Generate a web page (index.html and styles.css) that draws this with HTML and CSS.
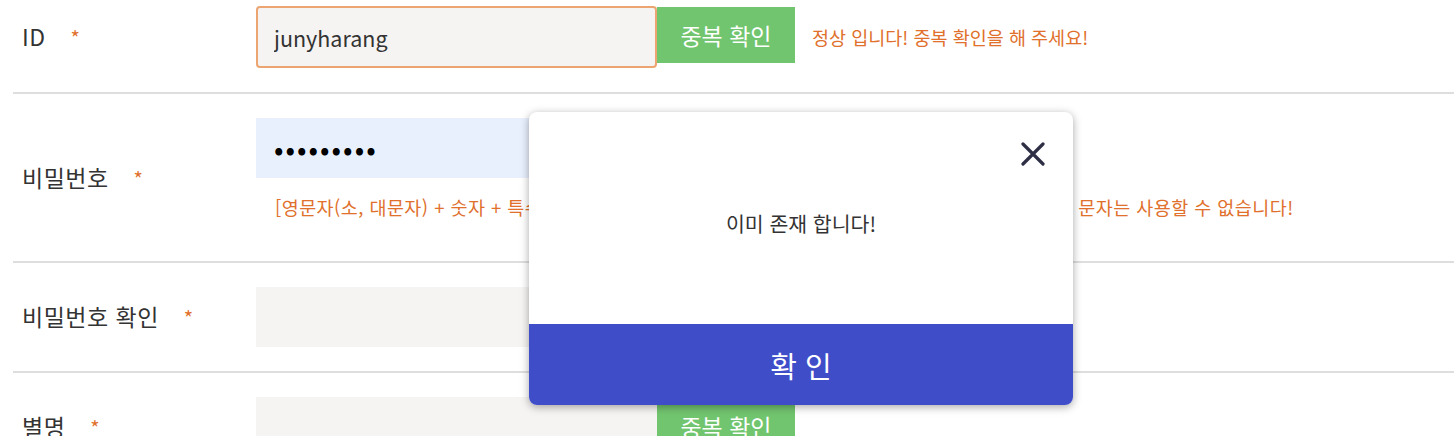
FILE: index.html
```html
<!DOCTYPE html>
<html lang="ko">
<head>
  <meta charset="UTF-8" />
  <meta name="viewport" content="width=device-width, initial-scale=1.0"/>
  <title>회원 가입</title>
  <link rel="stylesheet" href="styles.css">
</head>
<body>

  <form class="join-form">
    <div class="row first">
      <label class="label">ID <span class="req">*</span></label>
      <div class="field">
        <div class="line">
          <input type="text" class="input focused" value="junyharang" />
          <button type="button" class="check-btn">중복 확인</button>
          <span class="msg">정상 입니다! 중복 확인을 해 주세요!</span>
        </div>
      </div>
    </div>

    <div class="row">
      <label class="label">비밀번호 <span class="req">*</span></label>
      <div class="field">
        <div class="line">
          <input type="password" class="input filled" value="harang123" />
        </div>
        <p class="help">[영문자(소, 대문자) + 숫자 + 특수 문자] 조합으로 8~20자리 이내로 입력해 주세요. 그 외의 다른 특수 문자는 사용할 수 없습니다!</p>
      </div>
    </div>

    <div class="row">
      <label class="label">비밀번호 확인 <span class="req">*</span></label>
      <div class="field">
        <div class="line">
          <input type="password" class="input" />
        </div>
      </div>
    </div>

    <div class="row">
      <label class="label">별명 <span class="req">*</span></label>
      <div class="field">
        <div class="line">
          <input type="text" class="input" />
          <button type="button" class="check-btn">중복 확인</button>
        </div>
      </div>
    </div>
  </form>

  <div class="modal">
    <div class="modal-body">
      <button type="button" class="modal-close" aria-label="닫기">
        <svg width="24" height="24" viewBox="0 0 24 24">
          <path d="M2 2 L22 22 M22 2 L2 22" stroke="#2e2f44" stroke-width="3.2" stroke-linecap="round" fill="none"/>
        </svg>
      </button>
      <p class="modal-text">이미 존재 합니다!</p>
    </div>
    <button type="button" class="modal-ok">확 인</button>
  </div>

</body>
</html>
```

FILE: styles.css
```css
body {
  margin: 0;
  padding-left: 13px;
  font-family: "Noto Sans CJK KR", "Noto Sans", sans-serif;
  color: #333;
  background: #fff;
  overflow: hidden;
  position: relative;
  height: 436px;
}

.row {
  display: grid;
  grid-template-columns: 243px 1fr;
  align-items: center;
  padding: 24px 0;
  border-bottom: 2px solid #dedede;
}

.row.first {
  padding-top: 6px;
}

.label {
  padding-left: 9px;
  font-size: 23px;
  letter-spacing: 0.5px;
  line-height: 28px;
  color: #333;
}

.req {
  margin-left: 18px;
  color: #e0702c;
  font-size: 20px;
}

.line {
  display: flex;
  align-items: flex-start;
}

.input {
  box-sizing: border-box;
  width: 401px;
  height: 60px;
  padding: 0 18px;
  border: none;
  background: #f5f4f2;
  font-family: inherit;
  font-size: 21.5px;
  color: #333;
  outline: none;
}

.input.focused {
  height: 62px;
  border: 2px solid #eca571;
  border-radius: 4px;
  padding: 0 16px;
}

.input.filled {
  background: #e8f0fe;
  color: #000;
  font-size: 28px;
  letter-spacing: 2px;
}

.check-btn {
  width: 138px;
  height: 56px;
  margin-top: 1px;
  border: none;
  background: #72c56f;
  color: #fff;
  font-family: inherit;
  font-size: 23px;
}

.msg {
  align-self: center;
  margin-left: 17px;
  color: #e0702c;
  font-size: 18.5px;
}

.help {
  margin: 17px 0 18px;
  padding-left: 19px;
  color: #e0702c;
  font-size: 18.5px;
  letter-spacing: 0.44px;
  line-height: 24px;
}

.modal {
  position: absolute;
  left: 529px;
  top: 112px;
  width: 544px;
  border-radius: 8px;
  overflow: hidden;
  background: #fff;
  box-shadow: 0 2px 8px rgba(0, 0, 0, 0.35);
}

.modal-body {
  position: relative;
  height: 212px;
  display: flex;
  align-items: center;
  justify-content: center;
}

.modal-close {
  position: absolute;
  top: 30px;
  right: 28px;
  padding: 0;
  border: none;
  background: none;
  line-height: 0;
}

.modal-text {
  margin: 0;
  padding-top: 10px;
  font-size: 20.5px;
  color: #333;
}

.modal-ok {
  display: block;
  width: 100%;
  height: 81px;
  border: none;
  background: #3f4dc9;
  color: #fff;
  font-family: inherit;
  font-size: 29px;
}
```
